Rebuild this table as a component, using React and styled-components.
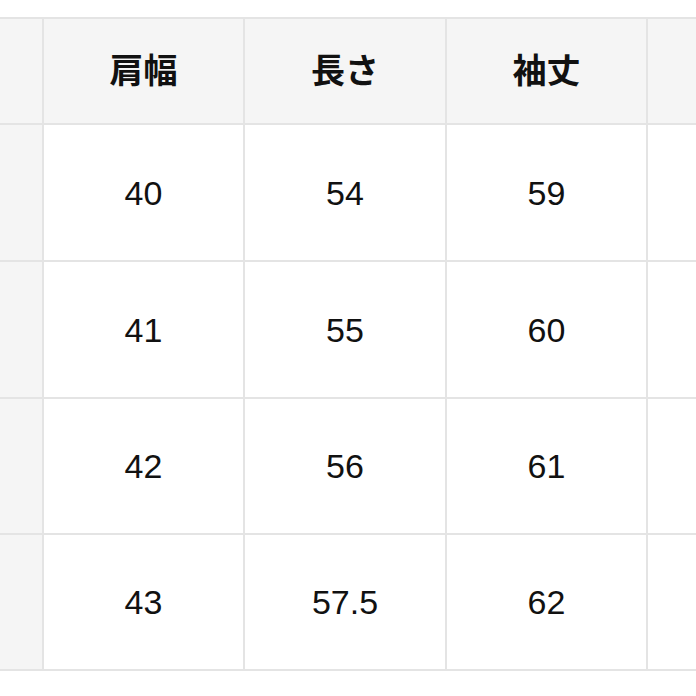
import React from 'react';
import styled, { createGlobalStyle } from 'styled-components';

const GlobalStyle = createGlobalStyle`
    html, body {
        margin: 0;
        padding: 0;
        background: #ffffff;
    }
    body {
        font-family: 'Liberation Sans', 'Noto Sans CJK JP', Arial, sans-serif;
        color: #111111;
    }
`;

const Page = styled.div`
    width: 696px;
    height: 696px;
    overflow: hidden;
    padding-top: 17px;
    box-sizing: border-box;
`;

const Grid = styled.div`
    display: grid;
    grid-template-columns: 42px 199px 200px 199px 200px;
    grid-template-rows: 104px 135px 135px 134px 134px;
    gap: 2px;
    padding: 2px 0;
    background: #e4e4e4;
    width: max-content;
`;

const Cell = styled.div`
    display: flex;
    align-items: center;
    justify-content: center;
    background: ${props => (props.head ? '#f5f5f5' : '#ffffff')};
    font-size: 34px;
    font-weight: ${props => (props.head ? 700 : 400)};
    line-height: 1;
`;

const headers = ['', '肩幅', '長さ', '袖丈', ''];
const rows = [
    ['40', '54', '59'],
    ['41', '55', '60'],
    ['42', '56', '61'],
    ['43', '57.5', '62']
];

export default function App() {
    return (
        <>
            <GlobalStyle />
            <Page>
                <Grid>
                    {headers.map((h, i) => (
                        <Cell head key={'h' + i}>
                            {h}
                        </Cell>
                    ))}
                    {rows.map((row, r) => (
                        <React.Fragment key={r}>
                            <Cell head />
                            {row.map((v, c) => (
                                <Cell key={c}>{v}</Cell>
                            ))}
                            <Cell />
                        </React.Fragment>
                    ))}
                </Grid>
            </Page>
        </>
    );
}
